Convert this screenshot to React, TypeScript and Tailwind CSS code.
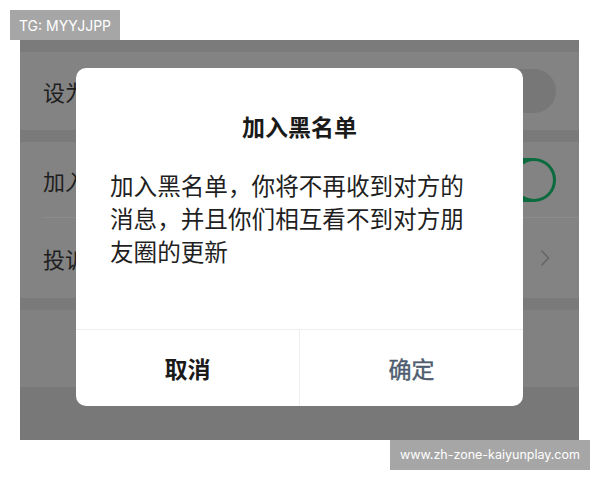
import React from 'react';

const font = { fontFamily: '"Noto Sans CJK SC", "Noto Sans", sans-serif' };
const labelFont = { fontFamily: 'Inter, "Noto Sans", sans-serif' };

const Row: React.FC<{ label: string; right?: React.ReactNode; h: string; divider?: boolean }> = ({
  label,
  right,
  h,
  divider,
}) => (
  <div className={`relative flex items-center justify-between bg-[#838383] pl-[23px] pr-[23px] ${h}`}>
    <span className="text-[22px] text-[#1e1e1e]">{label}</span>
    {right}
    {divider && <div className="absolute bottom-0 left-[23px] right-0 h-px bg-[#8c8c8c]" />}
  </div>
);

const Band: React.FC = () => <div className="h-[12px] bg-[#7a7a7a]" />;

export default function App() {
  return (
    <div className="relative h-[480px] w-[600px] bg-white" style={font}>
      <div
        className="absolute left-[10px] top-[10px] flex h-[30px] w-[110px] items-center justify-center bg-[#a6a6a6] text-[14px] text-white"
        style={labelFont}
      >
        TG: MYYJJPP
      </div>

      <div className="pt-[40px] pl-[20px]">
        <div className="relative flex h-[400px] w-[559px] flex-col bg-[#787878]">
          <div className="h-[12px] bg-[#7b7b7b]" />
          <Row
            label="设为星标朋友"
            h="h-[78px]"
            right={<div className="h-[44px] w-[76px] rounded-full bg-[#777777]" />}
          />
          <Band />
          <Row
            label="加入黑名单"
            h="h-[76px]"
            divider
            right={
              <div className="flex h-[44px] w-[80px] items-center justify-end rounded-full bg-[#0b6b3f] p-[3px]">
                <div className="h-[38px] w-[38px] rounded-full bg-[#838383]" />
              </div>
            }
          />
          <Row
            label="投诉"
            h="h-[80px]"
            right={
              <svg width="10" height="18" viewBox="0 0 10 18" fill="none" className="mr-[6px]">
                <path d="M1.5 1.5 L8.5 9 L1.5 16.5" stroke="#666" strokeWidth="1.6" />
              </svg>
            }
          />
          <Band />
          <div className="h-[77px] bg-[#818181]" />
          <div className="flex-1 bg-[#787878]" />

          <div className="absolute left-[56px] top-[28px] flex h-[338px] w-[447px] flex-col rounded-[10px] bg-white">
            <div className="flex-1 px-[34px] pt-[43px]">
              <div className="text-center text-[23px] font-bold leading-[30px] text-[#1a1a1a]">加入黑名单</div>
              <div className="mt-[28px] whitespace-nowrap text-[23.6px] leading-[33px] text-[#1f1f1f]">
                加入黑名单，你将不再收到对方的
                <br />
                消息，并且你们相互看不到对方朋
                <br />
                友圈的更新
              </div>
            </div>
            <div className="flex h-[77px] border-t border-[#eeeeee]">
              <div className="flex flex-1 items-center justify-center border-r border-[#eeeeee] text-[23px] font-bold text-[#1a1a1a]">
                取消
              </div>
              <div className="flex flex-1 items-center justify-center text-[23px] text-[#4f5c70] [-webkit-text-stroke:0.4px_#4f5c70]">
                确定
              </div>
            </div>
          </div>
        </div>
      </div>

      <div
        className="absolute left-[390px] top-[440px] flex h-[30px] w-[200px] items-center justify-center bg-[#a6a6a6] text-[12.5px] text-white"
        style={labelFont}
      >
        www.zh-zone-kaiyunplay.com
      </div>
    </div>
  );
}
